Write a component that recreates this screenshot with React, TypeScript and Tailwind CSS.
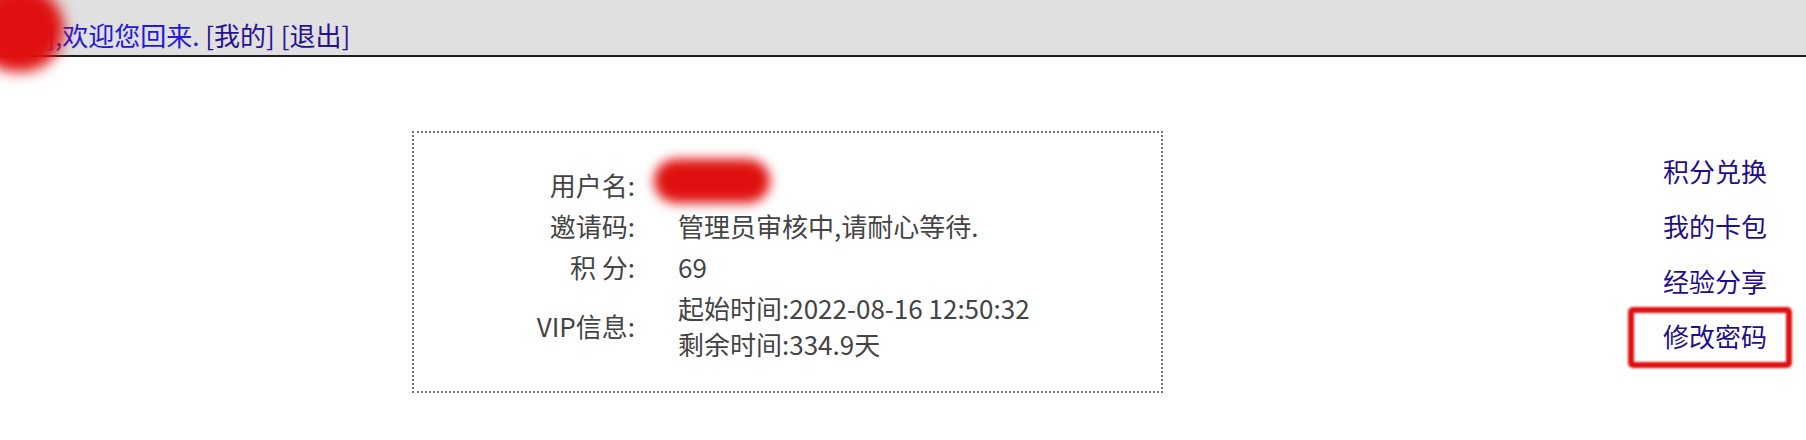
import React from "react";

export default function App() {
  return (
    <div className="relative w-[1806px] h-[440px] overflow-hidden bg-white font-['Noto_Sans_CJK_SC','Microsoft_YaHei',sans-serif] text-[26px] leading-[36px]">
      {/* header */}
      <div className="h-[57px] bg-[#e0e0e0] border-b-2 border-[#1f1f1f] pt-[17px] pl-[4px] text-[#2319d6] whitespace-pre">
        <span className="inline-block w-[51px] text-right text-[#2319d6]">xx]</span>
        <span>,欢迎您回来. </span>
        <a className="text-[#2a1190]">[我的]</a>
        <span> </span>
        <a className="text-[#2a1190]">[退出]</a>
      </div>
      {/* redaction blob in header */}
      <div className="absolute left-[-26px] top-[-14px] w-[90px] h-[86px] rounded-full bg-[#e01010] blur-[7px]" />

      <div className="flex items-start">
        {/* info box */}
        <div className="relative mt-[74px] ml-[412px] w-[751px] h-[262px] border-2 border-dotted border-[#747474] pt-[34px] text-[#444444]">
          <div className="grid grid-cols-[221px_auto] gap-x-[43px] gap-y-[5px]">
            <div className="text-right">用户名:</div>
            <div className="relative">
              <span className="invisible">user</span>
              <div className="absolute left-[-24px] top-[-8px] w-[116px] h-[44px] rounded-full bg-[#e01010] blur-[6px]" />
            </div>
            <div className="text-right">邀请码:</div>
            <div>管理员审核中,请耐心等待.</div>
            <div className="text-right">积 分:</div>
            <div>69</div>
            <div className="text-right self-center">VIP信息:</div>
            <div>
              <div>起始时间:2022-08-16 12:50:32</div>
              <div>剩余时间:334.9天</div>
            </div>
          </div>
        </div>

        {/* right links */}
        <div className="ml-[500px] mt-[96px] flex flex-col gap-[19px] text-[#1f0f8c]">
          <a>积分兑换</a>
          <a>我的卡包</a>
          <a>经验分享</a>
          <a className="relative">
            修改密码
            <span className="absolute -left-[35px] -right-[25px] -top-[11px] -bottom-[14px] border-[6px] border-[#e01010] rounded-[5px] blur-[1px]" />
          </a>
        </div>
      </div>
    </div>
  );
}
